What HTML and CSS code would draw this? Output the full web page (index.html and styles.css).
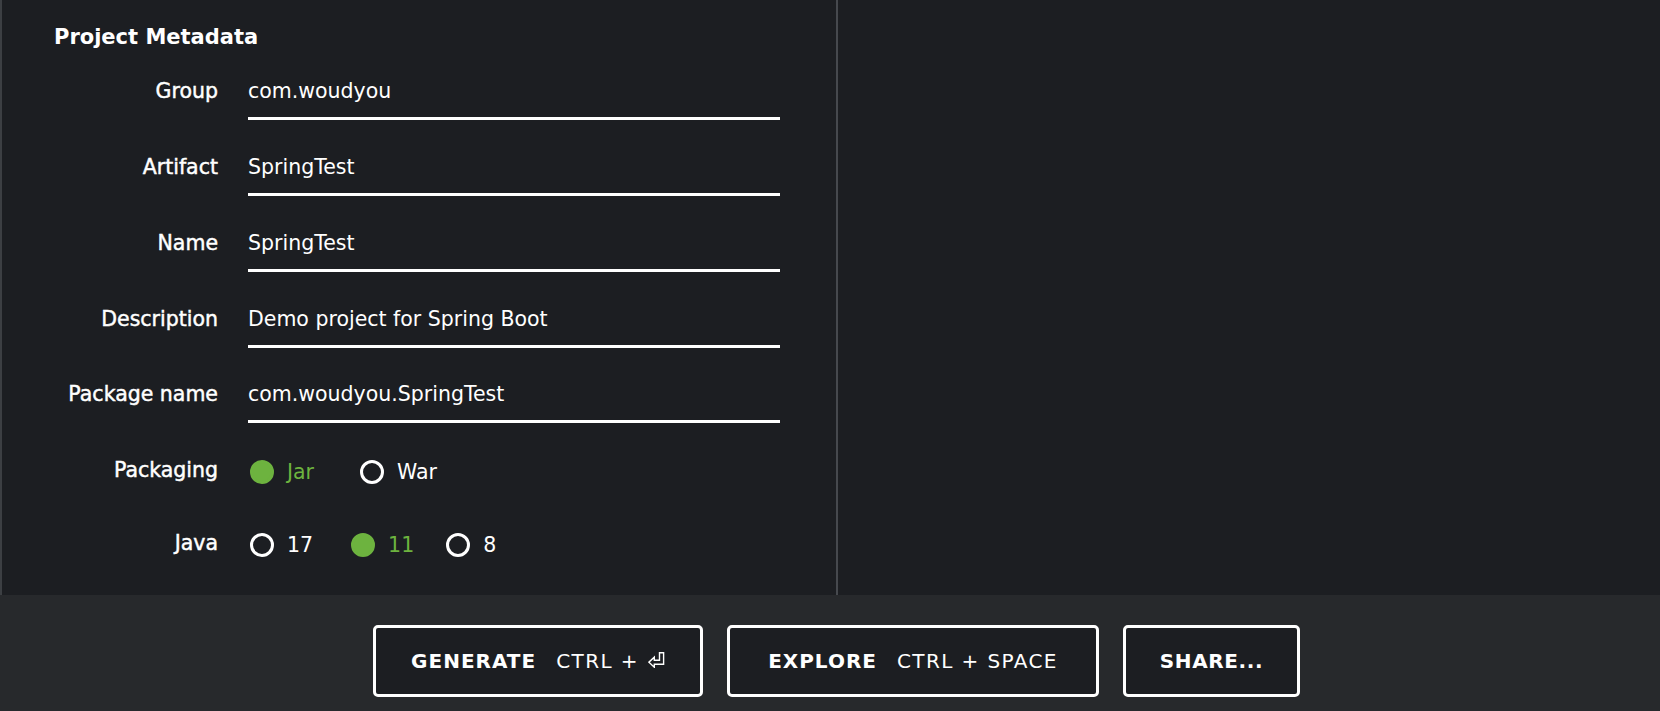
FILE: index.html
```html
<!DOCTYPE html>
<html lang="en">
<head>
<meta charset="utf-8">
<title>Project Metadata</title>
<link rel="stylesheet" href="styles.css">
</head>
<body>
<div class="main">
  <section class="left-col">
    <h2 class="title">Project Metadata</h2>
    <div class="rows">
      <div class="row">
        <div class="label">Group</div>
        <div class="field">com.woudyou</div>
      </div>
      <div class="row">
        <div class="label">Artifact</div>
        <div class="field">SpringTest</div>
      </div>
      <div class="row">
        <div class="label">Name</div>
        <div class="field">SpringTest</div>
      </div>
      <div class="row">
        <div class="label">Description</div>
        <div class="field">Demo project for Spring Boot</div>
      </div>
      <div class="row">
        <div class="label">Package name</div>
        <div class="field">com.woudyou.SpringTest</div>
      </div>
      <div class="row radio-row packaging">
        <div class="label">Packaging</div>
        <div class="options">
          <span class="option checked wide"><span class="radio"></span>Jar</span>
          <span class="option"><span class="radio"></span>War</span>
        </div>
      </div>
      <div class="row radio-row">
        <div class="label">Java</div>
        <div class="options">
          <span class="option"><span class="radio"></span>17</span>
          <span class="option checked narrow"><span class="radio"></span>11</span>
          <span class="option"><span class="radio"></span>8</span>
        </div>
      </div>
    </div>
  </section>
  <section class="right-col"></section>
</div>
<footer class="footer">
  <button class="btn btn-generate"><span class="btn-main">GENERATE</span><span class="btn-key"><span>CTRL +</span><svg class="enter" width="17" height="16" viewBox="0 0 17 16"><path d="M11.5 0.8 H15.6 V12.2 H6.3 V15.2 L0.9 10.2 L6.3 5.2 V8.2 H11.5 Z" fill="none" stroke="#fff" stroke-width="1.4" stroke-linejoin="miter"/></svg></span></button>
  <button class="btn btn-explore"><span class="btn-main">EXPLORE</span><span class="btn-key">CTRL + SPACE</span></button>
  <button class="btn btn-share"><span class="btn-main share">SHARE...</span></button>
</footer>
</body>
</html>
```
FILE: styles.css
```css
* { box-sizing: border-box; }
html, body { margin: 0; padding: 0; }
body {
  background: #1c1e22;
  color: #ffffff;
  font-family: "DejaVu Sans", "Liberation Sans", sans-serif;
  width: 1660px;
  height: 711px;
  overflow: hidden;
}
.main {
  display: flex;
  height: 595px;
  border-left: 2px solid #3c3f43;
}
.left-col {
  width: 836px;
  border-right: 2px solid #46494e;
  padding-left: 52px;
  padding-top: 25px;
}
.right-col { flex: 1; }
.title {
  margin: 0;
  font-size: 21px;
  line-height: 24px;
  font-weight: bold;
  color: #fff;
}
.rows {
  margin-top: 30.4px;
  display: flex;
  flex-direction: column;
  gap: 34.75px;
}
.row {
  display: grid;
  grid-template-columns: 164px 532px;
  column-gap: 30px;
  align-items: start;
}
.label {
  text-align: right;
  font-size: 20.5px;
  line-height: 24px;
  color: #fff;
  -webkit-text-stroke: 0.45px #fff;
}
.field {
  font-size: 20.5px;
  line-height: 24px;
  padding-bottom: 14px;
  border-bottom: 3px solid #fff;
  color: #fff;
  white-space: nowrap;
}
.radio-row.packaging { margin-bottom: 12px; }
.options {
  display: flex;
  align-items: center;
  padding-top: 2px;
  padding-left: 2px;
  gap: 38px;
}
.option {
  display: inline-flex;
  align-items: center;
  gap: 13px;
  font-size: 20.5px;
  line-height: 24px;
  color: #fff;
}
.option.wide { margin-right: 8px; }
.option.narrow { margin-right: -6px; }
.option.checked { color: #6db33f; }
.radio {
  width: 24px;
  height: 24px;
  border-radius: 50%;
  border: 3px solid #fff;
  flex: none;
}
.option.checked .radio {
  border-color: #6db33f;
  background: #6db33f;
}
.footer {
  height: 116px;
  background: #27292c;
  padding-top: 30px;
  padding-left: 373px;
  display: flex;
  align-items: flex-start;
  gap: 24px;
}
.btn {
  height: 72px;
  border: 3px solid #fff;
  border-radius: 5px;
  background: #1c1e22;
  color: #fff;
  display: flex;
  align-items: center;
  justify-content: center;
  gap: 20px;
  font-family: "DejaVu Sans", "Liberation Sans", sans-serif;
  padding: 0;
}
.btn-generate { width: 330px; }
.btn-explore { width: 372px; }
.btn-share { width: 177px; }
.btn-main {
  font-weight: bold;
  font-size: 20px;
  letter-spacing: 1px;
}
.btn-main.share { letter-spacing: 0.6px; }
.btn-key {
  font-size: 20px;
  letter-spacing: 1.4px;
  display: inline-flex;
  align-items: center;
}
.enter { margin-left: 9px; margin-top: -2px; }
```
